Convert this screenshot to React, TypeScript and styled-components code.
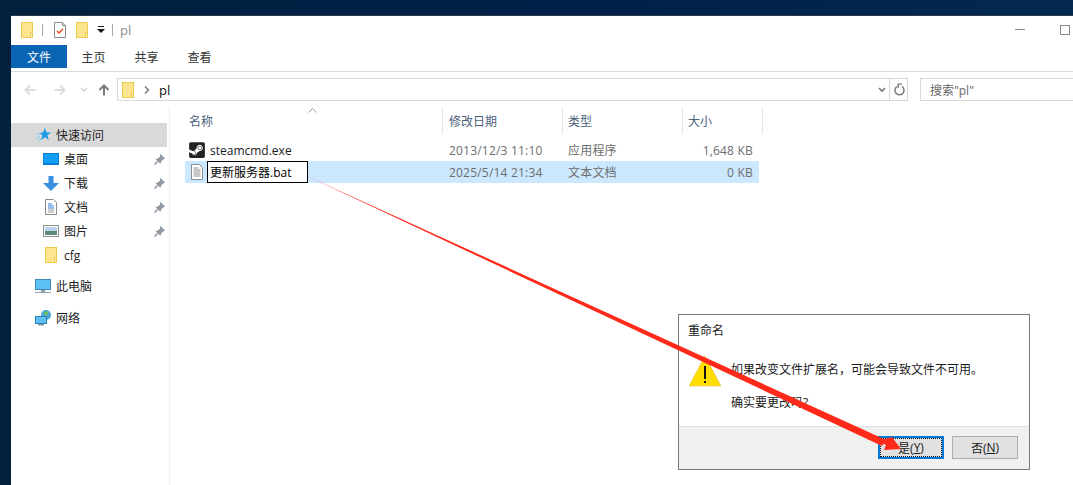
import { createGlobalStyle, styled } from "styled-components";
import { FaSteamSquare } from "react-icons/fa";

const GlobalStyle = createGlobalStyle`
  html, body {
    margin: 0;
    padding: 0;
    background: #01203f;
  }
  body {
    font-family: "Open Sans", "Noto Sans CJK SC", sans-serif;
    font-size: 12px;
    color: #1a1a1a;
  }
`;

const Desktop = styled.div`
  position: relative;
  width: 1073px;
  height: 485px;
  overflow: hidden;
  padding: 15px 0 0 11px;
  box-sizing: border-box;
  background: linear-gradient(90deg, #02203d 0%, #01214a 60%, #03294f 100%);
`;

const Explorer = styled.div`
  width: 1075px;
  height: 470px;
  background: #fff;
  border-top: 1px solid #2a3a4a;
  box-sizing: border-box;
  display: flex;
  flex-direction: column;
`;

const TitleBar = styled.div`
  height: 29px;
  box-sizing: border-box;
  display: flex;
  align-items: center;
  padding: 0 0 2px 10px;
  color: #9a9a9a;
  flex-shrink: 0;
`;

const TitleSep = styled.span<{ $left: number; $right: number }>`
  width: 1px;
  height: 12px;
  background: #a8a8a8;
  margin: 0 ${(p) => p.$right}px 0 ${(p) => p.$left}px;
`;

const TitleSpacer = styled.span<{ $width: number }>`
  width: ${(p) => p.$width}px;
`;

const TitleText = styled.span`
  flex: 1;
  font-size: 13px;
  color: #8c8c8c;
`;

const WindowControl = styled.span<{ $gap: number }>`
  display: flex;
  margin-right: ${(p) => p.$gap}px;
`;

const TabStrip = styled.div`
  height: 26px;
  display: flex;
  align-items: flex-start;
  border-bottom: 1px solid #dadbdc;
  flex-shrink: 0;
`;

const FileTab = styled.div`
  width: 56px;
  height: 23px;
  background: #0a64b4;
  color: #fff;
  display: flex;
  align-items: center;
  justify-content: center;
`;

const Tab = styled.div`
  width: 53px;
  height: 23px;
  display: flex;
  align-items: center;
  justify-content: center;
  color: #333;
`;

const Tabs = styled.div`
  display: flex;
`;

const NavBar = styled.div`
  height: 35px;
  box-sizing: border-box;
  display: flex;
  align-items: flex-start;
  padding: 6px 0 0 13px;
  flex-shrink: 0;
`;

const NavIcon = styled.span<{ $width: number; $gap: number }>`
  display: flex;
  align-self: center;
  margin-top: -6px;
  width: ${(p) => p.$width}px;
  margin-right: ${(p) => p.$gap}px;
`;

const AddressBox = styled.div`
  width: 791px;
  height: 23px;
  box-sizing: border-box;
  border: 1px solid #d9d9d9;
  display: flex;
  align-items: center;
  padding-left: 4px;
  margin-right: 12px;
`;

const AddressGap = styled.span`
  width: 10px;
`;

const Crumb = styled.span`
  flex: 1;
  margin-left: 9px;
  font-size: 13px;
  color: #111;
`;

const AddressEnd = styled.span`
  display: flex;
  align-items: center;
  height: 100%;
  border-left: 1px solid #d9d9d9;
  padding: 0 2px 0 4px;
  margin-left: 2px;
`;

const SearchBox = styled.div`
  flex: 1;
  height: 23px;
  box-sizing: border-box;
  border: 1px solid #d9d9d9;
  display: flex;
  align-items: center;
  padding-left: 9px;
  color: #666;
`;

const Body = styled.div`
  flex: 1;
  display: flex;
  min-height: 0;
`;

const Sidebar = styled.nav`
  width: 158px;
  border-right: 1px solid #efefef;
  padding-top: 16px;
  flex-shrink: 0;
`;

const NavRow = styled.div<{ $active?: boolean; $indent: number; $top?: number }>`
  height: 24px;
  width: 156px;
  margin-top: ${(p) => p.$top ?? 0}px;
  box-sizing: border-box;
  padding-left: ${(p) => p.$indent}px;
  padding-right: 2px;
  display: flex;
  align-items: center;
  background: ${(p) => (p.$active ? "#d9d9d9" : "transparent")};
  color: #222;
`;

const NavRowIcon = styled.span<{ $width: number }>`
  display: flex;
  justify-content: center;
  width: ${(p) => p.$width}px;
  margin-right: 5px;
`;

const NavLabel = styled.span`
  flex: 1;
`;

const Pane = styled.main`
  flex: 1;
  padding: 0 0 0 15px;
  position: relative;
`;

const SortCaret = styled.span`
  position: absolute;
  left: 138px;
  top: 1px;
  display: flex;
`;

const HeaderRow = styled.div`
  display: grid;
  grid-template-columns: 258px 120px 120px 80px;
  height: 27px;
  margin-bottom: 5px;
`;

const HeaderCell = styled.div<{ $pad: number }>`
  padding-left: ${(p) => p.$pad}px;
  display: flex;
  align-items: center;
  color: #4c607a;
  border-right: 1px solid #e5e5e5;
`;

const FileRow = styled.div<{ $selected?: boolean }>`
  display: grid;
  width: 574px;
  grid-template-columns: 257px 120px 120px 77px;
  height: 22px;
  align-items: center;
  background: ${(p) => (p.$selected ? "#cce8ff" : "transparent")};
  color: #6d6d6d;
`;

const NameCell = styled.div`
  display: flex;
  align-items: center;
  height: 100%;
  color: #1a1a1a;
`;

const FileIcon = styled.span`
  display: flex;
  justify-content: center;
  width: 16px;
  margin-left: 4px;
`;

const FileName = styled.span`
  margin-left: 5px;
`;

const RenameBox = styled.span`
  width: 101px;
  height: 22px;
  box-sizing: border-box;
  border: 1px solid #000;
  background: #fff;
  color: #000;
  margin-left: 2px;
  padding-left: 2px;
  display: flex;
  align-items: center;
`;

const Cell = styled.div<{ $pad?: number; $right?: boolean }>`
  padding-left: ${(p) => p.$pad ?? 0}px;
  padding-right: ${(p) => (p.$right ? 6 : 0)}px;
  text-align: ${(p) => (p.$right ? "right" : "left")};
  letter-spacing: 0.2px;
`;

const Dialog = styled.div`
  position: absolute;
  left: 678px;
  top: 314px;
  width: 352px;
  height: 156px;
  box-sizing: border-box;
  border: 1px solid #7a7a7a;
  background: #fff;
  display: flex;
  flex-direction: column;
  color: #1a1a1a;
`;

const DialogTitle = styled.div`
  height: 29px;
  padding-left: 9px;
  display: flex;
  align-items: center;
`;

const DialogContent = styled.div`
  flex: 1;
  display: flex;
  padding: 11px 0 0 10px;
`;

const DialogText = styled.div`
  margin-left: 10px;
  padding-top: 6px;
  display: flex;
  flex-direction: column;
  gap: 16px;
  line-height: 17px;
`;

const DialogFooter = styled.div`
  height: 43px;
  flex-shrink: 0;
  box-sizing: border-box;
  border-top: 1px solid #dfdfdf;
  background: #f0f0f0;
  display: flex;
  justify-content: flex-end;
  align-items: flex-start;
  gap: 8px;
  padding: 9px 11px 0 0;
`;

const DialogButton = styled.div<{ $primary?: boolean }>`
  width: 66px;
  height: 23px;
  box-sizing: border-box;
  display: flex;
  align-items: center;
  justify-content: center;
  background: #e1e1e1;
  border: ${(p) => (p.$primary ? "2px solid #0078d7" : "1px solid #adadad")};
  outline: ${(p) => (p.$primary ? "1px dotted #111" : "none")};
  outline-offset: -3px;
`;

const ArrowLayer = styled.svg`
  position: absolute;
  left: 0;
  top: 0;
  pointer-events: none;
`;

const Folder = () => (
  <svg width="12" height="16" viewBox="0 0 12 16">
    <rect x="0.5" y="0.5" width="11" height="15" fill="#fde48f" stroke="#ecc94f" />
    <rect x="9.5" y="10.5" width="2" height="5" fill="#fff1b8" stroke="#ecc94f" />
  </svg>
);

const CheckDoc = () => (
  <svg width="12" height="16" viewBox="0 0 12 16">
    <path d="M.5.5h8l3 3v12H.5z" fill="#fff" stroke="#8a8a8a" />
    <path d="M8.5.5v3h3" fill="#ddd" stroke="#8a8a8a" />
    <path d="M3 9l2 2 4-4" fill="none" stroke="#e8501e" strokeWidth="1.5" />
  </svg>
);

const DropMark = () => (
  <svg width="8" height="8" viewBox="0 0 8 8">
    <rect x="1" y="0" width="6" height="1" fill="#222" />
    <path d="M0 3h8L4 7z" fill="#111" />
  </svg>
);

const ArrowIcon = ({ rot, color }: { rot: number; color: string }) => (
  <svg width="12" height="12" viewBox="0 0 12 12" style={{ transform: `rotate(${rot}deg)` }}>
    <path d="M11.5 6H1.500M6 1.500L1.500 6 6 10.500" fill="none" stroke={color} strokeWidth="2" />
  </svg>
);

const Chevron = ({ color, width }: { color: string; width: number }) => (
  <svg width={width} height="6" viewBox="0 0 8 6">
    <path d="M1 1l3 3 3-3" fill="none" stroke={color} strokeWidth="1.6" />
  </svg>
);

const ChevronRight = () => (
  <svg width="6" height="8" viewBox="0 0 6 8">
    <path d="M1 .5L4.500 4 1 7.500" fill="none" stroke="#808080" strokeWidth="1.6" />
  </svg>
);

const Refresh = () => (
  <svg width="11" height="13" viewBox="0 0 11 13">
    <path d="M3.200 3.400a4.500 4.500 0 1 0 4.600 0" fill="none" stroke="#7d7d7d" strokeWidth="1.500" />
    <path d="M3.500.5h4.500v1.300H5v3H3.500z" fill="#7d7d7d" />
  </svg>
);

const Pin = () => (
  <svg width="11" height="11" viewBox="0 0 11 11">
    <path d="M6.500.5l4 4-1.300.6-2.600 2.600-.4 1.600L2.300 5.400l1.600-.4 2.600-2.600z" fill="#8f9aa3" stroke="#7f8a94" strokeWidth="0.8" />
    <path d="M3.500 7.500L.5 10.500" stroke="#7f8a94" strokeWidth="1.200" />
  </svg>
);

const StarIcon = () => (
  <svg width="15" height="14" viewBox="0 0 15 14">
    <path d="M9 0l1.500 4.400H15l-3.600 2.900 1.400 4.700L9 9.200 5 12l1.400-4.700L3.500 5l3.400-.6z" fill="#1f9ae8" />
    <path d="M0 11l4-3M1 7l3-2M2 13l3-2" stroke="#7cc4f0" strokeWidth="1" />
  </svg>
);

const DesktopIcon = () => (
  <svg width="16" height="12" viewBox="0 0 16 12">
    <rect width="16" height="12" fill="#0a7fd6" />
    <rect x="1" y="1" width="14" height="9" fill="#12a0f5" />
  </svg>
);

const DownloadIcon = () => (
  <svg width="16" height="15" viewBox="0 0 16 15">
    <path d="M5.500 0h5v7H16l-8 8-8-8h5.500z" fill="#3a8ee0" />
  </svg>
);

const DocIcon = () => (
  <svg width="12" height="16" viewBox="0 0 12 16">
    <path d="M.5.5h8l3 3v12H.5z" fill="#fff" stroke="#8a8a8a" />
    <path d="M3 5h4M3 7h6M3 9h6" stroke="#2a86d8" />
    <path d="M3 11h6M3 13h6" stroke="#9a9a9a" />
  </svg>
);

const PictureIcon = () => (
  <svg width="16" height="12" viewBox="0 0 16 12">
    <rect x="0.5" y="0.5" width="15" height="11" fill="#fff" stroke="#8f8f8f" />
    <rect x="2" y="2" width="12" height="4" fill="#b9d4ea" />
    <rect x="2" y="6" width="12" height="4" fill="#5d8a7a" />
  </svg>
);

const PcIcon = () => (
  <svg width="16" height="15" viewBox="0 0 16 15">
    <rect x="0.5" y="0.5" width="15" height="10" fill="#5cc0f2" stroke="#3f87b5" />
    <rect x="6" y="11" width="4" height="2" fill="#8fa4b3" />
    <rect x="0" y="13" width="16" height="1" fill="#8fa4b3" />
  </svg>
);

const NetworkIcon = () => (
  <svg width="16" height="16" viewBox="0 0 16 16">
    <circle cx="11" cy="5" r="5" fill="#4ba3dc" />
    <path d="M8 3l4-2 2 3-3 2z" fill="#6fbf6a" />
    <rect x="0.5" y="6.500" width="11" height="7" fill="#5cc0f2" stroke="#2f7fb5" />
    <rect x="3" y="14" width="6" height="1.500" fill="#7f97aa" />
  </svg>
);

const TextFileIcon = () => (
  <svg width="12" height="16" viewBox="0 0 12 16">
    <path d="M.5.5h8l3 3v12H.5z" fill="#fff" stroke="#8d8d8d" />
    <path d="M2.500 4h5M2.500 6h7M2.500 8h7M2.500 10h7M2.500 12h7" stroke="#8d8d8d" />
  </svg>
);

const WarningIcon = () => (
  <svg width="32" height="32" viewBox="0 0 32 32">
    <path d="M16 1L32 31H0z" fill="#ffdd00" stroke="#e0b93a" strokeWidth="0.5" />
    <rect x="15" y="11" width="2" height="13" fill="#111" />
    <rect x="15" y="26" width="2" height="2" fill="#111" />
  </svg>
);

const quickLinks = [
  { label: "桌面", icon: <DesktopIcon />, pinned: true },
  { label: "下载", icon: <DownloadIcon />, pinned: true },
  { label: "文档", icon: <DocIcon />, pinned: true },
  { label: "图片", icon: <PictureIcon />, pinned: true },
  { label: "cfg", icon: <Folder />, pinned: false },
];

const App = () => {
  return (
    <Desktop>
      <GlobalStyle />
      <Explorer>
        <TitleBar>
          <Folder />
          <TitleSep $left={9} $right={11} />
          <CheckDoc />
          <TitleSpacer $width={10} />
          <Folder />
          <TitleSpacer $width={9} />
          <DropMark />
          <TitleSep $left={7} $right={7} />
          <TitleText>pl</TitleText>
          <WindowControl $gap={35}>
            <svg width="10" height="1" viewBox="0 0 10 1">
              <rect width="10" height="1" fill="#8a8a8a" />
            </svg>
          </WindowControl>
          <WindowControl $gap={16}>
            <svg width="10" height="10" viewBox="0 0 10 10">
              <rect x="0.5" y="0.5" width="9" height="9" fill="none" stroke="#8a8a8a" />
            </svg>
          </WindowControl>
        </TitleBar>
        <TabStrip>
          <FileTab>文件</FileTab>
          <Tabs>
            <Tab>主页</Tab>
            <Tab>共享</Tab>
            <Tab>查看</Tab>
          </Tabs>
        </TabStrip>
        <NavBar>
          <NavIcon $width={12} $gap={18}>
            <ArrowIcon rot={0} color="#dcdcdc" />
          </NavIcon>
          <NavIcon $width={12} $gap={14}>
            <ArrowIcon rot={180} color="#dcdcdc" />
          </NavIcon>
          <NavIcon $width={8} $gap={10}>
            <Chevron color="#d8d8d8" width={8} />
          </NavIcon>
          <NavIcon $width={12} $gap={7}>
            <ArrowIcon rot={90} color="#7b7b7b" />
          </NavIcon>
          <AddressBox>
            <Folder />
            <AddressGap />
            <ChevronRight />
            <Crumb>pl</Crumb>
            <Chevron color="#777" width={10} />
            <AddressEnd>
              <Refresh />
            </AddressEnd>
          </AddressBox>
          <SearchBox>搜索"pl"</SearchBox>
        </NavBar>
        <Body>
          <Sidebar>
            <NavRow $active $indent={25}>
              <NavRowIcon $width={15}>
                <StarIcon />
              </NavRowIcon>
              <NavLabel>快速访问</NavLabel>
            </NavRow>
            {quickLinks.map((link) => (
              <NavRow key={link.label} $indent={32}>
                <NavRowIcon $width={16}>{link.icon}</NavRowIcon>
                <NavLabel>{link.label}</NavLabel>
                {link.pinned && <Pin />}
              </NavRow>
            ))}
            <NavRow $indent={24} $top={7}>
              <NavRowIcon $width={16}>
                <PcIcon />
              </NavRowIcon>
              <NavLabel>此电脑</NavLabel>
            </NavRow>
            <NavRow $indent={24} $top={8}>
              <NavRowIcon $width={16}>
                <NetworkIcon />
              </NavRowIcon>
              <NavLabel>网络</NavLabel>
            </NavRow>
          </Sidebar>
          <Pane>
            <SortCaret>
              <svg width="9" height="5" viewBox="0 0 9 5">
                <path d="M.5 4.500L4.500 .5l4 4" fill="none" stroke="#9a9a9a" />
              </svg>
            </SortCaret>
            <HeaderRow>
              <HeaderCell $pad={4}>名称</HeaderCell>
              <HeaderCell $pad={6}>修改日期</HeaderCell>
              <HeaderCell $pad={5}>类型</HeaderCell>
              <HeaderCell $pad={5}>大小</HeaderCell>
            </HeaderRow>
            <FileRow>
              <NameCell>
                <FileIcon>
                  <FaSteamSquare size={18} color="#222" />
                </FileIcon>
                <FileName>steamcmd.exe</FileName>
              </NameCell>
              <Cell $pad={7}>2013/12/3 11:10</Cell>
              <Cell $pad={6}>应用程序</Cell>
              <Cell $right>1,648 KB</Cell>
            </FileRow>
            <FileRow $selected>
              <NameCell>
                <FileIcon>
                  <TextFileIcon />
                </FileIcon>
                <RenameBox>更新服务器.bat</RenameBox>
              </NameCell>
              <Cell $pad={7}>2025/5/14 21:34</Cell>
              <Cell $pad={6}>文本文档</Cell>
              <Cell $right>0 KB</Cell>
            </FileRow>
          </Pane>
        </Body>
      </Explorer>
      <Dialog>
        <DialogTitle>重命名</DialogTitle>
        <DialogContent>
          <WarningIcon />
          <DialogText>
            <span>如果改变文件扩展名，可能会导致文件不可用。</span>
            <span>确实要更改吗?</span>
          </DialogText>
        </DialogContent>
        <DialogFooter>
          <DialogButton $primary>
            是(<u>Y</u>)
          </DialogButton>
          <DialogButton>
            否(<u>N</u>)
          </DialogButton>
        </DialogFooter>
      </Dialog>
      <ArrowLayer width="1073" height="485" viewBox="0 0 1073 485">
        <polygon points="307,176 886,440 882,446" fill="#ff2a1a" />
        <polygon points="901,449 884,450 886,445 878,441 892,437" fill="#ff2a1a" />
      </ArrowLayer>
    </Desktop>
  );
};

export default App;
